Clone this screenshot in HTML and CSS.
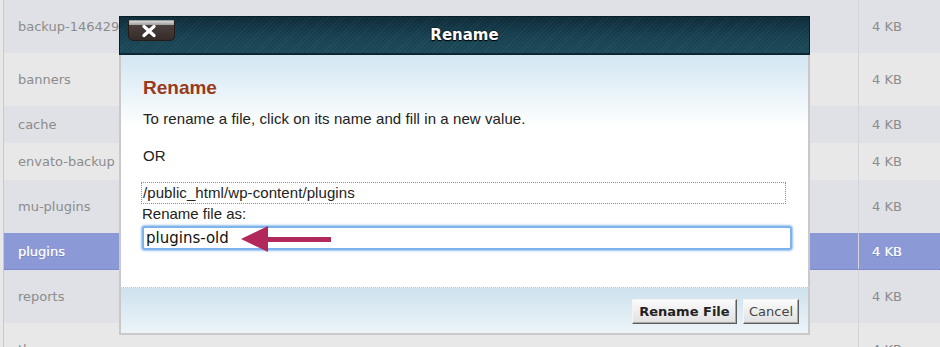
FILE: index.html
```html
<!doctype html>
<html lang="en">
<head>
    <meta charset="UTF-8">
    <meta name="viewport" content="width=device-width, initial-scale=1.0">
    <link rel="stylesheet" href="styles.css">
    <title>Rename</title>
</head>
<body>
<div class="file-list">
    <div class="row tall odd"><span class="name">backup-1464298822.zip</span><span class="size">4 KB</span></div>
    <div class="row tall even"><span class="name">banners</span><span class="size">4 KB</span></div>
    <div class="row short odd"><span class="name">cache</span><span class="size">4 KB</span></div>
    <div class="row short even"><span class="name">envato-backup</span><span class="size">4 KB</span></div>
    <div class="row tall odd"><span class="name">mu-plugins</span><span class="size">4 KB</span></div>
    <div class="row short selected"><span class="name">plugins</span><span class="size">4 KB</span></div>
    <div class="row tall odd"><span class="name">reports</span><span class="size">4 KB</span></div>
    <div class="row tall even"><span class="name">themes</span><span class="size">4 KB</span></div>
</div>

<div class="dialog">
    <div class="dialog-title">
        <button class="close-btn" type="button" aria-label="Close">
            <svg width="16" height="14" viewBox="0 0 16 14">
                <path d="M3 2.5 L13 11.5 M13 2.5 L3 11.5" stroke="#000" stroke-opacity=".35" stroke-width="3.8" stroke-linecap="round" transform="translate(0 .8)"/>
                <path d="M3 2.5 L13 11.5 M13 2.5 L3 11.5" stroke="#fff" stroke-width="3.4" stroke-linecap="round"/>
            </svg>
        </button>
        <span class="dialog-heading">Rename</span>
    </div>
    <div class="dialog-body">
        <h2>Rename</h2>
        <p class="intro">To rename a file, click on its name and fill in a new value.</p>
        <p class="or">OR</p>
        <div class="path-box">/public_html/wp-content/plugins</div>
        <label class="field-label" for="newname">Rename file as:</label>
        <div class="field">
            <input id="newname" type="text" value="plugins-old">
            <svg class="pointer" width="92" height="27" viewBox="0 0 92 27">
                <polygon points="0,13 27,0 27,26" fill="#b3285b"/>
                <rect x="26" y="11" width="64" height="5" fill="#b3285b"/>
            </svg>
        </div>
    </div>
    <div class="dialog-footer">
        <button class="btn btn-primary" type="button">Rename File</button>
        <button class="btn" type="button">Cancel</button>
    </div>
</div>
</body>
</html>
```

FILE: styles.css
```css
* {
    box-sizing: border-box;
}

html, body {
    height: 100%;
}

body {
    margin: 0;
    overflow: hidden;
    background: #e8e8e8;
    font-family: 'Liberation Sans', Arial, sans-serif;
    font-size: 15px;
    color: #222;
}

/* file list behind the dialog */
.file-list {
    height: 100%;
    overflow: hidden;
    margin-left: 3px;
    border-left: 1px solid #c6c9d0;
    font-family: 'DejaVu Sans', sans-serif;
    font-size: 13px;
}

.row {
    display: flex;
    align-items: center;
    color: #8c8c8c;
}

.row.tall {
    height: 53px;
}

.row.short {
    height: 37px;
}

.row.odd {
    background: #dfe1e6;
}

.row.even {
    background: #e8e8e8;
}

.row.selected {
    background: #8b9ad6;
    border-bottom: 1px dotted #6f7fc4;
    color: #f6f7fb;
    text-shadow: 0 0 .4px #fff, 0 1px 0 rgba(60, 70, 120, .3);
}

.row .name {
    flex: 1;
    padding-left: 14px;
    white-space: nowrap;
    overflow: hidden;
}

.row .size {
    width: 82px;
    height: 100%;
    display: flex;
    align-items: center;
    padding-left: 13px;
    border-left: 1px solid #d3d5da;
}

/* dialog */
.dialog {
    position: absolute;
    left: 119px;
    top: 16px;
    width: 691px;
}

.dialog-title {
    position: relative;
    height: 39px;
    display: flex;
    align-items: center;
    justify-content: center;
    border: 1px solid #0a1e28;
    border-bottom: 2px solid #0d2732;
    background:
        repeating-linear-gradient(135deg, rgba(255, 255, 255, .04) 0 1px, transparent 1px 3px),
        linear-gradient(#0e2b39, #174151 55%, #1b4958);
}

.dialog-heading {
    color: #fff;
    font-family: 'DejaVu Sans', sans-serif;
    font-weight: bold;
    font-size: 15px;
    text-shadow: 0 1px 1px #000, 0 0 2px #000;
}

.close-btn {
    position: absolute;
    left: 8px;
    top: 3px;
    width: 47px;
    height: 21px;
    padding: 3px 0 0 12px;
    display: flex;
    align-items: flex-start;
    border: 1px solid #231c1b;
    border-top-color: #9a9a9a;
    border-radius: 2px 2px 5px 5px;
    background:
        linear-gradient(#d9d9d9, #9c9c9c 4px, #4a3f3d 4px, #352c2a);
}

.dialog-body {
    height: 232px;
    padding: 22px 15px 0 20px;
    border-left: 2px solid #c9c9c9;
    border-right: 2px solid #c9c9c9;
    background: linear-gradient(#d2e6f3, #ffffff 72px);
}

.dialog-body h2 {
    margin: 0 0 12px 2px;
    font-size: 19px;
    line-height: 22px;
    color: #9a3a1c;
}

.dialog-body p {
    margin: 0;
    line-height: 16px;
    padding-left: 2px;
    letter-spacing: .08px;
}

.dialog-body .or {
    margin: 21px 0 18px;
}

.path-box {
    width: 645px;
    height: 22px;
    line-height: 20px;
    padding-left: 1px;
    border: 1px dotted #8e8e8e;
    white-space: nowrap;
    letter-spacing: .08px;
}

.field-label {
    display: block;
    margin-top: 2px;
    line-height: 16px;
    padding-left: 1px;
}

.field {
    position: relative;
    margin-top: 4px;
}

.field input {
    display: block;
    width: 650px;
    height: 24px;
    margin-left: 1px;
    padding: 0 2px;
    border: 2px solid #7fb3ec;
    border-radius: 3px;
    box-shadow: 0 0 2px 1px rgba(120, 175, 240, .75);
    font-family: 'DejaVu Sans', sans-serif;
    font-size: 15px;
    color: #111;
    outline: none;
}

.pointer {
    position: absolute;
    left: 100px;
    top: 0;
}

.dialog-footer {
    height: 48px;
    display: flex;
    justify-content: flex-end;
    align-items: flex-start;
    gap: 6px;
    padding: 11px 9px 0 0;
    border: 2px solid #c9c9c9;
    border-top: 1px dotted #b5cbd8;
    background: linear-gradient(#cde1ee, #edf4f9);
}

.btn {
    height: 25px;
    padding: 0 5px;
    border: 1px solid;
    border-color: #f4f4f4 #5c5c5c #5c5c5c #f4f4f4;
    box-shadow: inset -1px -1px 0 #a9a9a9;
    background: linear-gradient(#fbfbfb, #e0e0e0);
    font-family: 'DejaVu Sans', sans-serif;
    font-size: 13px;
    color: #444;
}

.btn-primary {
    width: 105px;
    font-weight: bold;
    color: #222;
}
```
